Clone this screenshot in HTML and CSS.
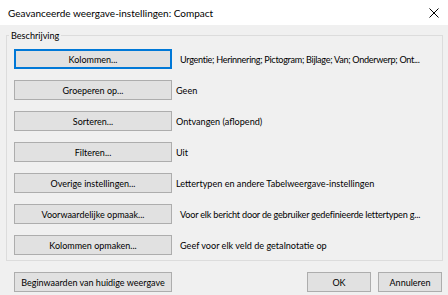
FILE: index.html
```html
<!DOCTYPE html>
<html lang="nl">
<head>
  <meta charset="UTF-8" />
  <title>Geavanceerde weergave-instellingen: Compact</title>
  <link rel="stylesheet" href="styles.css">
</head>
<body>
  <div class="window">
    <div class="titlebar">
      <span class="title">Geavanceerde weergave-instellingen: Compact</span>
      <svg class="close" width="10" height="10" viewBox="0 0 10 10">
        <path d="M0.5 0.5 L9.5 9.5 M9.5 0.5 L0.5 9.5" stroke="#000" stroke-width="1" fill="none" />
      </svg>
    </div>

    <fieldset class="group">
      <legend>Beschrijving</legend>
      <div class="rows">
        <div class="row">
          <button class="btn default">Kolommen...</button>
          <span class="desc far tighter">Urgentie; Herinnering; Pictogram; Bijlage; Van; Onderwerp; Ont...</span>
        </div>
        <div class="row">
          <button class="btn">Groeperen op...</button>
          <span class="desc">Geen</span>
        </div>
        <div class="row">
          <button class="btn">Sorteren...</button>
          <span class="desc">Ontvangen (aflopend)</span>
        </div>
        <div class="row">
          <button class="btn">Filteren...</button>
          <span class="desc">Uit</span>
        </div>
        <div class="row">
          <button class="btn">Overige instellingen...</button>
          <span class="desc">Lettertypen en andere Tabelweergave-instellingen</span>
        </div>
        <div class="row">
          <button class="btn">Voorwaardelijke opmaak...</button>
          <span class="desc far tight">Voor elk bericht door de gebruiker gedefinieerde lettertypen g...</span>
        </div>
        <div class="row">
          <button class="btn">Kolommen opmaken...</button>
          <span class="desc far">Geef voor elk veld de getalnotatie op</span>
        </div>
      </div>
    </fieldset>

    <div class="footer">
      <button class="btn">Beginwaarden van huidige weergave</button>
      <div class="actions">
        <button class="btn small">OK</button>
        <button class="btn small">Annuleren</button>
      </div>
    </div>
  </div>
</body>
</html>
```

FILE: styles.css
```css
body {
  margin: 0;
  background: #f0f0f0;
  font-family: Lato, "Open Sans", sans-serif;
  font-size: 9.1px;
  color: #000000;
}
.window {
  width: 448px;
  height: 295px;
  overflow: hidden;
}
.titlebar {
  height: 25px;
  background: #ffffff;
  display: flex;
  align-items: center;
  justify-content: space-between;
  padding: 0 9px 0 8px;
  box-sizing: border-box;
}
.title {
  font-size: 10px;
}
.group {
  margin: 3px 5px 0 6px;
  border: 1px solid #dcdcdc;
  padding: 6px 0 5px 7px;
  min-width: 0;
}
.group legend {
  padding: 0 2px;
  margin-left: -5px;
  line-height: 15px;
}
.rows {
  display: flex;
  flex-direction: column;
  gap: 11px;
}
.row {
  display: flex;
  align-items: center;
  height: 20px;
}
.btn {
  width: 158px;
  height: 20px;
  padding: 0;
  background: #e1e1e1;
  border: 1px solid #adadad;
  font-family: inherit;
  font-size: 9px;
  color: #000000;
  white-space: nowrap;
  flex-shrink: 0;
}
.btn.default {
  border-color: #0078d7;
  box-shadow: inset 0 0 0 1px #0078d7;
}
.desc {
  margin-left: 4px;
  white-space: nowrap;
}
.desc.far {
  margin-left: 8px;
}
.desc.tight {
  letter-spacing: -0.2px;
}
.desc.tighter {
  letter-spacing: -0.3px;
}
.footer {
  display: flex;
  justify-content: space-between;
  margin: 11px 6px 0 14px;
}
.actions {
  display: flex;
  gap: 7px;
}
.btn.small {
  width: 64px;
}
```
